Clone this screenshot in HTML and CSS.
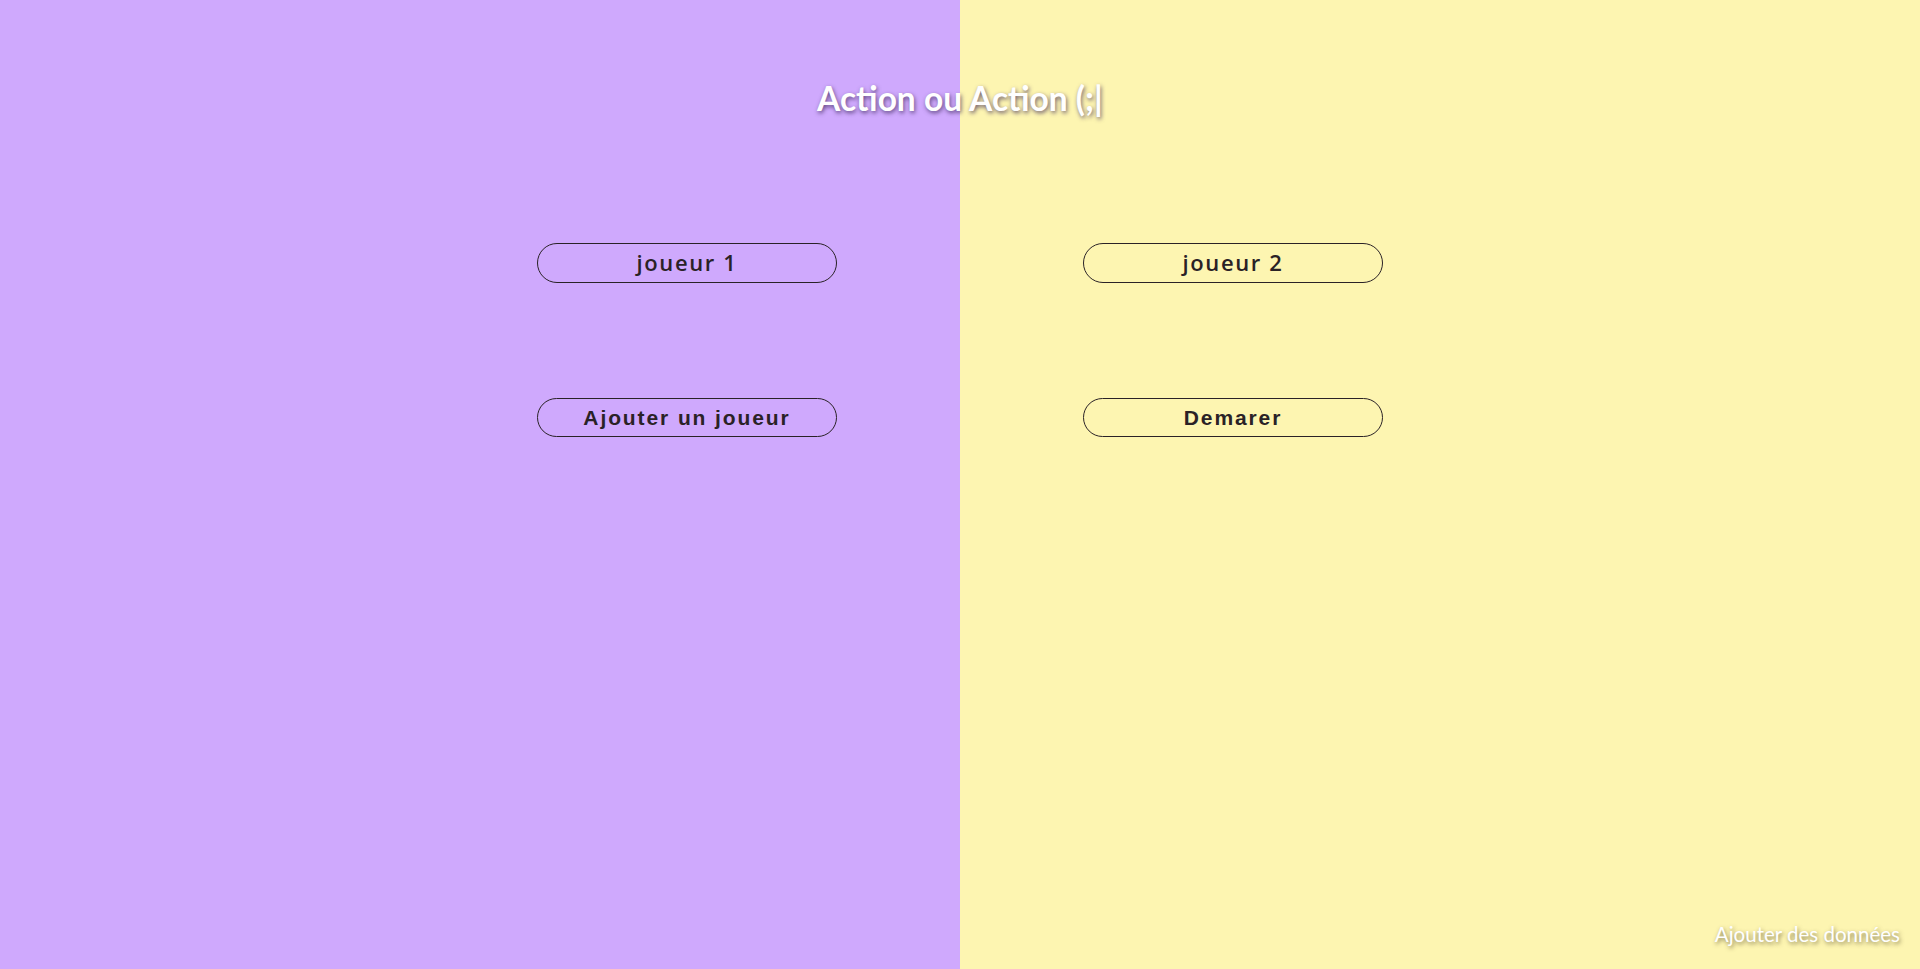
FILE: index.html
```html
<!DOCTYPE html>
<html lang="fr">
<head>
<meta charset="utf-8">
<title>Action ou Action</title>
<link rel="stylesheet" href="styles.css">
</head>
<body>
<div class="page">
  <h1 class="title">Action ou Action (;|</h1>
  <div class="controls">
    <div class="field">joueur 1</div>
    <div class="field">joueur 2</div>
    <button class="btn">Ajouter un joueur</button>
    <button class="btn">Demarer</button>
  </div>
  <footer class="footer">Ajouter des données</footer>
</div>
</body>
</html>
```
FILE: styles.css
```css
html, body {
  margin: 0;
  padding: 0;
  height: 100%;
  overflow: hidden;
}
body {
  background: linear-gradient(to right, #cfa9fd 0, #cfa9fd 50%, #fdf5b1 50%, #fdf5b1 100%);
  font-family: "Liberation Sans", Arial, sans-serif;
}
.page {
  height: 100vh;
  display: flex;
  flex-direction: column;
  box-sizing: border-box;
}
.title {
  margin: 77px 0 0;
  text-align: center;
  font-family: "Lato", "Open Sans", sans-serif;
  font-weight: 700;
  font-size: 33.5px;
  line-height: 42px;
  color: #fff;
  text-shadow: 1px 2px 4px rgba(60, 40, 90, 0.75);
}
.controls {
  margin: 124px auto 0;
  display: grid;
  grid-template-columns: 300px 300px;
  column-gap: 246px;
  row-gap: 115px;
}
.field, .btn {
  box-sizing: border-box;
  height: 40px;
  border: 1px solid #2a2226;
  border-radius: 20px;
  background: transparent;
  color: #2a2226;
  display: flex;
  align-items: center;
  justify-content: center;
  padding: 0;
}
.field {
  font-family: "Open Sans", sans-serif;
  font-weight: 600;
  font-size: 22px;
  letter-spacing: 1.6px;
  padding-bottom: 2px;
}
.btn {
  height: 39px;
  font-family: "Liberation Sans", Arial, sans-serif;
  font-weight: 700;
  font-size: 21px;
  letter-spacing: 1.9px;
}
.footer {
  margin-top: auto;
  padding: 0 20px 20px 0;
  text-align: right;
  font-family: "Lato", "Open Sans", sans-serif;
  font-size: 20.5px;
  line-height: 30px;
  color: #fff;
  text-shadow: 1px 2px 4px rgba(80, 70, 40, 0.7);
}
```
